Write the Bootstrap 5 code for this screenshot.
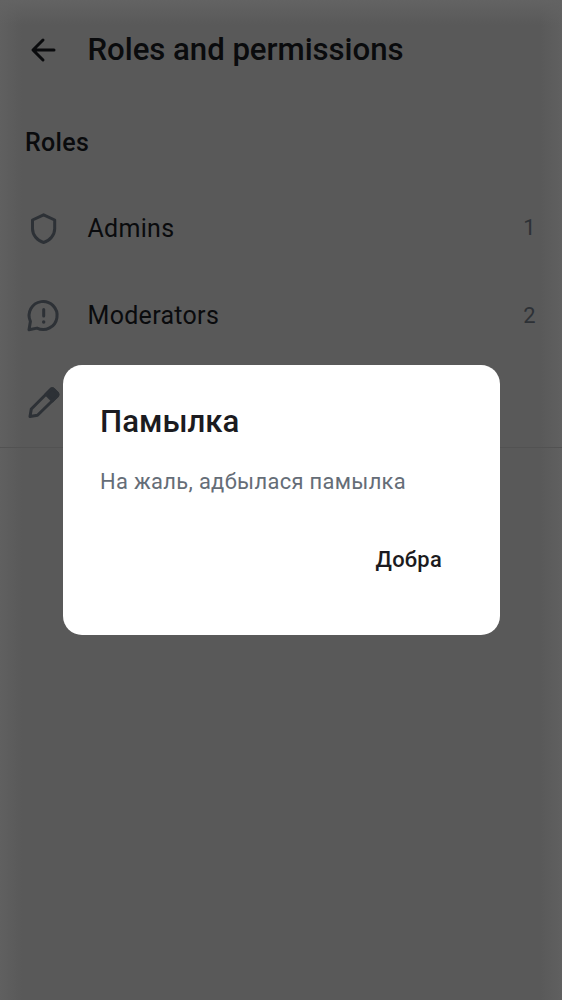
<!DOCTYPE html>
<html lang="be">
<head>
<meta charset="utf-8">
<meta name="viewport" content="width=device-width, initial-scale=1">
<title>Roles and permissions</title>
<link href="https://cdn.jsdelivr.net/npm/bootstrap@5.3.0/dist/css/bootstrap.min.css" rel="stylesheet">
<style>
body{font-family:Roboto,"Noto Sans",sans-serif;background:#595959;color:#0a0b0d;height:1000px;overflow:hidden}
.screen{height:1000px;background:linear-gradient(#636363,#59595900 25px),linear-gradient(90deg,#606060,#59595900 22px,#59595900 540px,#606060),#595959}
.screen svg,.screen span,.screen h1,.screen h2{flex:none}
.icon{width:38px;height:38px;fill:none;stroke:#2d3136;stroke-width:3;stroke-linecap:round;stroke-linejoin:round}
.topbar{height:100px;padding-left:25px;gap:24.5px}
.topbar .icon{stroke:#0a0b0d}
.page-title{font-size:31.2px;font-weight:500;line-height:40px;letter-spacing:-.04px}
.section{height:85px;padding-left:25px;font-size:25px;font-weight:500;letter-spacing:.35px;line-height:85px}
.role{height:87.3px;padding:0 26px 0 25px;gap:24.5px;font-size:25px;letter-spacing:.3px}
.count{font-size:21.9px;color:#2d3136;letter-spacing:.39px}
.rule{height:1px;background:#525252}
.shade{z-index:2}
.alert-box{width:437px;height:270px;border-radius:19px;padding:37.5px;color:#1b1b20;margin-top:-1px}
.alert-title{font-size:31.2px;font-weight:500;line-height:40px}
.alert-text{font-size:21.9px;line-height:31px;letter-spacing:.33px;color:#656d77}
.ok{font-size:21.9px;font-weight:500;line-height:31px;letter-spacing:.3px;color:#1b1b20;margin:47px 20px 0 0}
</style>
</head>
<body>
<main class="screen">
  <header class="topbar d-flex align-items-center">
    <svg class="icon" viewBox="0 0 38 38"><path d="M29 19H8.500M18 9 8 19l10 10"/></svg>
    <h1 class="page-title m-0">Roles and permissions</h1>
  </header>
  <h2 class="section m-0">Roles</h2>
  <div class="role d-flex align-items-center">
    <svg class="icon" viewBox="0 0 38 38"><path d="M18.600 4.800 29.700 10v8.800c0 6-4.700 12-11.100 13.700C12.200 30.800 7.500 24.800 7.500 18.800V10Z"/></svg>
    <span>Admins</span><span class="count ms-auto">1</span>
  </div>
  <div class="role d-flex align-items-center">
    <svg class="icon" viewBox="0 0.600 38 38"><path d="M4 33.300 5.400 25A14 14 0 1 1 12 31.700ZM18.700 13v6.500"/><circle cx="18.700" cy="25.600" r="1.700" fill="#2d3136" stroke="none"/></svg>
    <span>Moderators</span><span class="count ms-auto">2</span>
  </div>
  <div class="role d-flex align-items-center">
    <svg class="icon" viewBox="0 0 38 38"><path d="M5 32.500 6.300 25 25.500 5.800q1.700-1.700 3.500 0l3 3q1.700 1.700 0 3.500L12.500 31.300Z"/><path d="m21 10.300 4.500-4.500q1.700-1.700 3.500 0l3 3q1.700 1.700 0 3.500L27.500 16.800Z" fill="#2d3136"/></svg>
  </div>
  <div class="rule"></div>
</main>
<div class="shade position-fixed top-0 start-0 w-100 h-100 d-flex align-items-center justify-content-center">
  <section class="alert-box bg-white d-flex flex-column" role="alertdialog">
    <h2 class="alert-title m-0">Памылка</h2>
    <p class="alert-text mb-0 mt-4">На жаль, адбылася памылка</p>
    <button class="ok btn p-0 border-0 align-self-end">Добра</button>
  </section>
</div>
<script src="https://cdn.jsdelivr.net/npm/bootstrap@5.3.0/dist/js/bootstrap.bundle.min.js"></script>
</body>
</html>
